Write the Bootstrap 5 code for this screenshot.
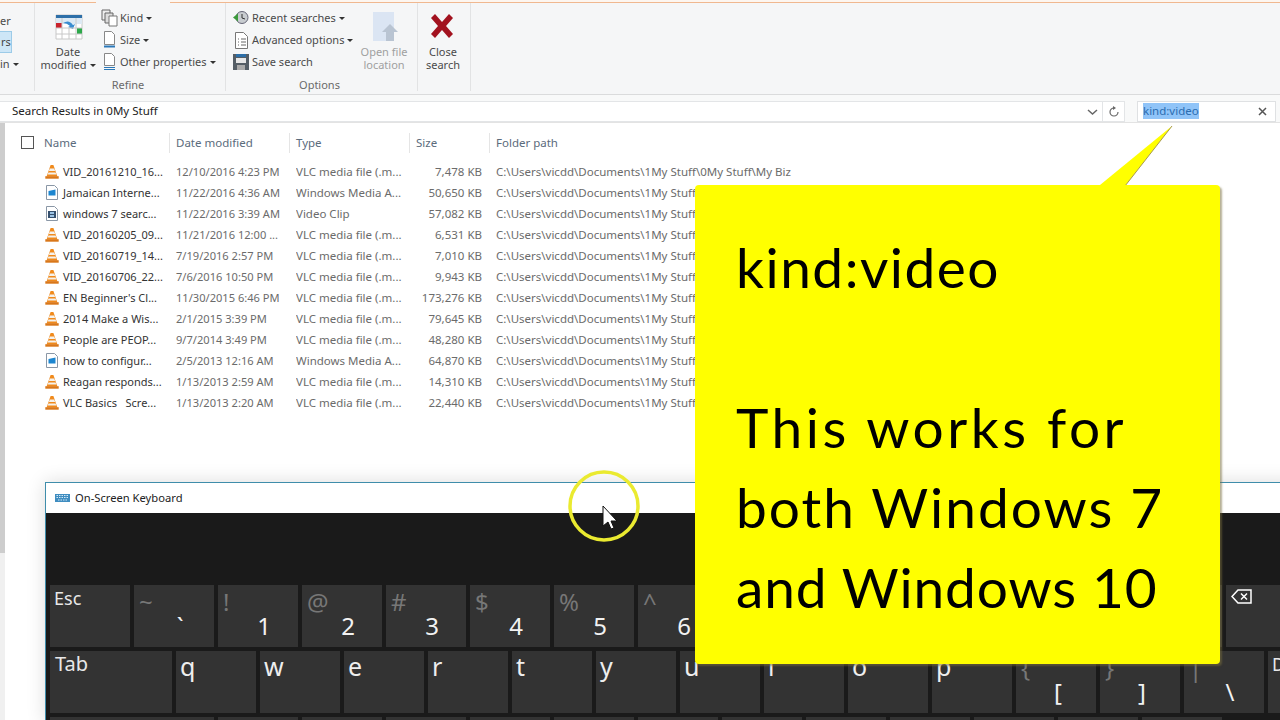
<!DOCTYPE html>
<html lang="en"><head><meta charset="utf-8"><title>Search</title>
<link href="https://cdn.jsdelivr.net/npm/bootstrap@5.3.0/dist/css/bootstrap.min.css" rel="stylesheet">
<style>
html,body{width:1280px;height:720px;overflow:hidden;background:#fff}
body{font-family:"Noto Sans","Open Sans",sans-serif;font-size:11.5px;line-height:1;color:#444}
.stage{width:1280px;height:720px;position:relative;overflow:hidden;background:#fff}
.tabline{height:3px;background:#f5f6f7}
.tabline>div{height:3px}
.tl-o{border-bottom:1px solid #f0b890;background:#fdf6f0}
.tl-w{background:#f5f6f7}
.rib{height:92px;background:#f5f6f7;border-bottom:1px solid #dadbdc}
.grp{position:relative;border-right:1px solid #e2e3e4;height:88px;flex:none}
.g0{width:35px}.g1{width:191px}.g2{width:192px}.g3{width:53px}
.glabel{position:absolute;left:0;right:4px;top:76px;text-align:center;color:#6a6a6a;font-size:11px}
.it{position:absolute;white-space:nowrap;color:#4a4a4a;font-size:11px;line-height:13px;margin-top:-1px}
.c{text-align:center;white-space:normal}
.car{display:inline-block;border-left:3px solid transparent;border-right:3px solid transparent;border-top:3px solid #333;vertical-align:2px;margin-left:3px}
.ico{position:absolute}
.addr{height:28px;padding-top:6px;background:#f8f9f9;border-bottom:1px solid #e3e3e3}
.abox{height:21px;background:#fff;border:1px solid #e3e5e7;border-left:0;width:1125px;margin-right:12px;color:#222;font-size:11.5px;padding-left:12px}
.abox-t{margin-top:-2px}
.sbox{height:21px;width:139px;background:#fff;border:1px solid #dfe1e3;padding-left:5px}
.sel{background:#90c4f8;color:#2a6cb0;font-size:11.5px;padding:2px 0;margin-top:-1px}
.refbtn{width:22px;height:19px;border-left:1px solid #e3e5e7;color:#666}
.track{width:5px;height:597px;background:#f0f0f0;flex:none}
.thumb{height:430px;background:#cdcdcd}
.side{width:15px;height:597px;background:#fff;flex:none}
.hdr{height:38px;padding-top:10px;color:#5b6b7c;font-size:11.5px}
.hc{flex:none;height:20px;padding-left:6px;border-left:1px solid #e5e5e5;line-height:20px}
.chk{width:13px;height:13px;border:1px solid #555;flex:none;margin:3px 10px 0 1px}
.rows{padding-left:25px}
.rw{height:21px;line-height:21px;color:#6b6b6b;white-space:nowrap;font-size:11.5px}
.n{width:131px;flex:none;color:#333;display:flex;align-items:center;gap:4px;font-size:11px}
.n svg{flex:none}
.d{width:120px;flex:none;font-size:11.1px}
.t{width:120px;flex:none;overflow:hidden}
.s{width:66px;flex:none;text-align:right}
.p{margin-left:14px;flex:none}
.osk{position:absolute;left:45px;top:482px;width:1300px;height:240px;border:1px solid #3f8dab;border-bottom:0;border-right:0;background:#1a1a1a;box-shadow:0 0 18px rgba(0,0,0,.14)}
.osk-t{height:30px;background:#fff;color:#222;font-size:11.2px;padding-left:9px;gap:5px}
.osk-e{height:72px}
.keys{padding-left:4px;gap:4px}
.krow{gap:4px;height:62px}
.ky{width:80px;height:62px;background:#333;position:relative;flex:none;color:#fff;font-family:"Noto Sans",sans-serif}
.ky.w1{width:122px}.ky.w2{width:164px}
.up{position:absolute;left:5px;top:4px;font-size:24px;line-height:26px;color:#777}
.dn{position:absolute;left:36px;width:20px;text-align:center;top:27px;font-size:24px;line-height:28px;color:#f2f2f2}
.dn-b{left:32px}
.lb{position:absolute;left:4px;top:3px;font-size:18px;line-height:20px;color:#e8e8e8}
.lb-t{left:5px;top:3px;font-size:20px}
.lt{position:absolute;left:4px;top:0;font-size:25px;line-height:30px;color:#eee}
.note{position:absolute;left:695px;top:185px;width:525px;height:479px;background:#ff0;border-radius:4px;box-shadow:2px 2px 2px rgba(120,110,60,.55);padding:42px 0 0 41px;color:#000;font-family:"Lato",sans-serif;font-size:55px;line-height:80px;white-space:nowrap;letter-spacing:1.5px}
.line-a{letter-spacing:3.5px}
.line-b{letter-spacing:2px}
.line-c{letter-spacing:.9px}
.tail{position:absolute;left:1090px;top:120px}
.ring{position:absolute;left:566px;top:468px}
</style></head>
<body>
<svg width="0" height="0" class="position-absolute">
<symbol id="vlc" viewBox="0 0 14 15"><path d="M5.600 1h2.800l4 11.500H1.600z" fill="#f08a1c"/><path d="M4.800 4.500h4.400l.9 2.600H3.900zM3.400 8.600h7.200l.7 2H2.700z" fill="#f4f2ee"/><path d="M.3 12.200h13.400v2.500H.3z" fill="#d9771a"/></symbol>
<symbol id="wma" viewBox="0 0 12 15"><path d="M.5.500h8l3 3v11H.5z" fill="#fff" stroke="#8a97a6"/><path d="M2.500 6l7-1.500v6h-7z" fill="#1d86d0"/></symbol>
<symbol id="vid" viewBox="0 0 12 15"><path d="M.5.500h8l3 3v11H.5z" fill="#fff" stroke="#8a97a6"/><path d="M2 5h8v7H2z" fill="#36506e"/><path d="M4 6h4v2H4zM4 9h4v2H4z" fill="#9cc4e6"/></symbol>
</svg>
<div class="stage">
  <div class="tabline d-flex"><div class="tl-o" style="width:96px"></div><div class="tl-w" style="width:74px"></div><div class="tl-o flex-grow-1"></div></div>
  <div class="rib d-flex">
    <div class="grp g0">
      <span class="it" style="left:0;top:12px">er</span>
      <span class="it" style="left:-8px;top:29px;background:#cde6f7;border:1px solid #9ccbe8;padding:3px 1px 3px 8px;height:22px;width:20px;color:#444">rs</span>
      <span class="it" style="left:0;top:55px">in<i class="car"></i></span>
    </div>
    <div class="grp g1">
      <svg class="ico" style="left:20px;top:11px" width="28" height="26" viewBox="0 0 28 26"><path d="M1 1h26v24H1z" fill="#fff" stroke="#c8c8c8"/><path d="M1 1h26v3H1z" fill="#2d6fa8"/><path d="M1 4h26v6H1z" fill="#dce9f4"/><path d="M1 9h6v5H1z" fill="#c9232c"/><path d="M22 14h5v6h-5z" fill="#2ca84a"/><path d="M8 9q6-4 10 2l2-1-2 5-5-2 2-1q-3-3-7-3z" fill="#3a8dd0"/><path d="M7 4v21M14 14v11M21 4v21M1 14h26M1 20h26" stroke="#c8c8c8" fill="none"/></svg>
      <div class="it c" style="left:0;width:66px;top:43px">Date<br>modified<i class="car"></i></div>
      <svg class="ico" style="left:66px;top:6px" width="17" height="18" viewBox="0 0 17 18"><path d="M1 1h8v10H1z" fill="#eee" stroke="#666"/><path d="M4 4h8v10H4z" fill="#ddd" stroke="#666"/><path d="M8 7h8v10H8z" fill="#fff" stroke="#777"/></svg>
      <span class="it" style="left:85px;top:9px">Kind<i class="car"></i></span>
      <svg class="ico" style="left:68px;top:28px" width="13" height="18" viewBox="0 0 13 18"><path d="M1.500.500h7l3 3v10h-10z" fill="#fff" stroke="#888"/><path d="M1 15.500h11" stroke="#2b78b8" stroke-width="2"/></svg>
      <span class="it" style="left:85px;top:31px">Size<i class="car"></i></span>
      <svg class="ico" style="left:68px;top:50px" width="13" height="18" viewBox="0 0 13 18"><path d="M1.500.500h7l3 3v9h-10z" fill="#fff" stroke="#888"/><path d="M1 14.500h11M1 16.500h11" stroke="#2b78b8"/></svg>
      <span class="it" style="left:85px;top:53px">Other properties<i class="car"></i></span>
      <div class="glabel">Refine</div>
    </div>
    <div class="grp g2">
      <svg class="ico" style="left:7px;top:7px" width="16" height="15" viewBox="0 0 16 15"><circle cx="9" cy="7.500" r="6" fill="#c8ccd0" stroke="#667"/><path d="M9 4v4l3 1" stroke="#333" fill="none"/><path d="M0 7.500l5-4v8z" fill="#3c9a3c"/></svg>
      <span class="it" style="left:26px;top:9px">Recent searches<i class="car"></i></span>
      <svg class="ico" style="left:9px;top:29px" width="13" height="17" viewBox="0 0 13 17"><path d="M.5.500h8l4 4v12H.5z" fill="#fff" stroke="#777"/><path d="M3 7h1M6 7h5M3 10h1M6 10h5M3 13h1M6 13h5" stroke="#666"/></svg>
      <span class="it" style="left:26px;top:31px">Advanced options<i class="car"></i></span>
      <svg class="ico" style="left:7px;top:51px" width="16" height="16" viewBox="0 0 16 16"><path d="M0 0h16v16H0z" fill="#555e66"/><path d="M3 0h10v3H3z" fill="#2d6fa8"/><path d="M3 4h10v5H3z" fill="#e8e8e8"/><path d="M4 11h8v5H4z" fill="#aaa"/></svg>
      <span class="it" style="left:26px;top:53px">Save search</span>
      <svg class="ico" style="left:147px;top:9px" width="26" height="30" viewBox="0 0 26 30"><path d="M0 0h21v29H0z" fill="#dbe5f3"/><path d="M17 12l8 8h-4v9h-8v-9H9z" fill="#b9c4d2"/></svg>
      <div class="it c" style="left:133px;width:50px;top:43px;color:#a0a0a0">Open file<br>location</div>
      <div class="glabel">Options</div>
    </div>
    <div class="grp g3">
      <svg class="ico" style="left:11px;top:10px" width="26" height="26" viewBox="0 0 26 26"><path d="M2 5l4-4 7 8 7-8 4 4-7 8 7 8-4 4-7-8-7 8-4-4 7-8z" fill="#a2121f"/></svg>
      <div class="it c" style="left:0;width:50px;top:43px">Close<br>search</div>
    </div>
  </div>
  <div class="addr d-flex">
    <div class="abox d-flex align-items-center justify-content-between">
      <span class="abox-t">Search Results in 0My Stuff</span>
      <span class="d-flex align-items-center">
        <svg width="11" height="8" viewBox="0 0 11 8" class="me-1"><path d="M1 2l4.500 4L10 2" stroke="#666" stroke-width="1.500" fill="none"/></svg>
        <span class="refbtn d-flex align-items-center justify-content-center"><svg width="12" height="12" viewBox="0 0 12 12"><path d="M6 2a4 4 0 1 0 4 4" stroke="#666" stroke-width="1.200" fill="none"/><path d="M5 0l3 2-3 2z" fill="#666"/></svg></span>
      </span>
    </div>
    <div class="sbox d-flex align-items-center justify-content-between"><span class="sel">kind:video</span><svg class="me-2" width="9" height="9" viewBox="0 0 9 9"><path d="M1 1l7 7M8 1l-7 7" stroke="#555" stroke-width="1.500"/></svg></div>
  </div>
  <div class="d-flex">
    <div class="track"><div class="thumb"></div></div><div class="side"></div>
    <div class="flex-grow-1">
      <div class="hdr d-flex">
        <div class="chk"></div>
        <div style="width:125px;flex:none;height:20px;line-height:20px">Name</div>
        <div class="hc" style="width:120px">Date modified</div>
        <div class="hc" style="width:120px">Type</div>
        <div class="hc" style="width:80px">Size</div>
        <div class="hc">Folder path</div>
      </div>
      <div class="rows">
        <div class="rw d-flex"><div class="n"><svg width="14" height="15"><use href="#vlc"/></svg>VID_20161210_16...</div><div class="d">12/10/2016 4:23 PM</div><div class="t">VLC media file (.m...</div><div class="s">7,478 KB</div><div class="p">C:\Users\vicdd\Documents\1My Stuff\0My Stuff\My Biz</div></div>
        <div class="rw d-flex"><div class="n"><svg width="14" height="15"><use href="#wma"/></svg>Jamaican Interne...</div><div class="d">11/22/2016 4:36 AM</div><div class="t">Windows Media A...</div><div class="s">50,650 KB</div><div class="p">C:\Users\vicdd\Documents\1My Stuff</div></div>
        <div class="rw d-flex"><div class="n"><svg width="14" height="15"><use href="#vid"/></svg>windows 7 searc...</div><div class="d">11/22/2016 3:39 AM</div><div class="t">Video Clip</div><div class="s">57,082 KB</div><div class="p">C:\Users\vicdd\Documents\1My Stuff</div></div>
        <div class="rw d-flex"><div class="n"><svg width="14" height="15"><use href="#vlc"/></svg>VID_20160205_09...</div><div class="d">11/21/2016 12:00 ...</div><div class="t">VLC media file (.m...</div><div class="s">6,531 KB</div><div class="p">C:\Users\vicdd\Documents\1My Stuff</div></div>
        <div class="rw d-flex"><div class="n"><svg width="14" height="15"><use href="#vlc"/></svg>VID_20160719_14...</div><div class="d">7/19/2016 2:57 PM</div><div class="t">VLC media file (.m...</div><div class="s">7,010 KB</div><div class="p">C:\Users\vicdd\Documents\1My Stuff</div></div>
        <div class="rw d-flex"><div class="n"><svg width="14" height="15"><use href="#vlc"/></svg>VID_20160706_22...</div><div class="d">7/6/2016 10:50 PM</div><div class="t">VLC media file (.m...</div><div class="s">9,943 KB</div><div class="p">C:\Users\vicdd\Documents\1My Stuff</div></div>
        <div class="rw d-flex"><div class="n"><svg width="14" height="15"><use href="#vlc"/></svg>EN Beginner's Cl...</div><div class="d">11/30/2015 6:46 PM</div><div class="t">VLC media file (.m...</div><div class="s">173,276 KB</div><div class="p">C:\Users\vicdd\Documents\1My Stuff</div></div>
        <div class="rw d-flex"><div class="n"><svg width="14" height="15"><use href="#vlc"/></svg>2014 Make a Wis...</div><div class="d">2/1/2015 3:39 PM</div><div class="t">VLC media file (.m...</div><div class="s">79,645 KB</div><div class="p">C:\Users\vicdd\Documents\1My Stuff</div></div>
        <div class="rw d-flex"><div class="n"><svg width="14" height="15"><use href="#vlc"/></svg>People are PEOP...</div><div class="d">9/7/2014 3:49 PM</div><div class="t">VLC media file (.m...</div><div class="s">48,280 KB</div><div class="p">C:\Users\vicdd\Documents\1My Stuff</div></div>
        <div class="rw d-flex"><div class="n"><svg width="14" height="15"><use href="#wma"/></svg>how to configur...</div><div class="d">2/5/2013 12:16 AM</div><div class="t">Windows Media A...</div><div class="s">64,870 KB</div><div class="p">C:\Users\vicdd\Documents\1My Stuff</div></div>
        <div class="rw d-flex"><div class="n"><svg width="14" height="15"><use href="#vlc"/></svg>Reagan responds...</div><div class="d">1/13/2013 2:59 AM</div><div class="t">VLC media file (.m...</div><div class="s">14,310 KB</div><div class="p">C:\Users\vicdd\Documents\1My Stuff</div></div>
        <div class="rw d-flex"><div class="n"><svg width="14" height="15"><use href="#vlc"/></svg>VLC Basics &nbsp; Scre...</div><div class="d">1/13/2013 2:20 AM</div><div class="t">VLC media file (.m...</div><div class="s">22,440 KB</div><div class="p">C:\Users\vicdd\Documents\1My Stuff</div></div>
      </div>
    </div>
  </div>
  <div class="osk">
    <div class="osk-t d-flex align-items-center"><svg width="15" height="8" viewBox="0 0 15 8"><path d="M0 0h15v8H0z" fill="#3f8dc0"/><path d="M1.500 1.500h12M1.500 3.500h12M3 6h9" stroke="#d4e8f6" stroke-dasharray="1.500 1"/></svg><span>On-Screen Keyboard</span></div>
    <div class="osk-e"></div>
    <div class="keys d-flex flex-column">
      <div class="krow d-flex">
        <div class="ky"><span class="lb">Esc</span></div>
        <div class="ky"><span class="up">~</span><span class="dn">`</span></div>
        <div class="ky"><span class="up">!</span><span class="dn">1</span></div>
        <div class="ky"><span class="up">@</span><span class="dn">2</span></div>
        <div class="ky"><span class="up">#</span><span class="dn">3</span></div>
        <div class="ky"><span class="up">$</span><span class="dn">4</span></div>
        <div class="ky"><span class="up">%</span><span class="dn">5</span></div>
        <div class="ky"><span class="up">^</span><span class="dn">6</span></div>
        <div class="ky"></div><div class="ky"></div><div class="ky"></div><div class="ky"></div><div class="ky"></div><div class="ky"></div>
        <div class="ky"><svg class="ico" style="left:5px;top:3px" width="22" height="17" viewBox="0 0 22 17"><path d="M7 2h13v13H7L1 8.500z" fill="none" stroke="#fff" stroke-width="1.500"/><path d="M10 5.500l6 6M16 5.500l-6 6" stroke="#fff" stroke-width="1.500"/></svg></div>
      </div>
      <div class="krow d-flex">
        <div class="ky w1"><span class="lb lb-t">Tab</span></div>
        <div class="ky"><span class="lt">q</span></div>
        <div class="ky"><span class="lt">w</span></div>
        <div class="ky"><span class="lt">e</span></div>
        <div class="ky"><span class="lt">r</span></div>
        <div class="ky"><span class="lt">t</span></div>
        <div class="ky"><span class="lt">y</span></div>
        <div class="ky"><span class="lt">u</span></div>
        <div class="ky"><span class="lt">i</span></div>
        <div class="ky"><span class="lt">o</span></div>
        <div class="ky"><span class="lt">p</span></div>
        <div class="ky"><span class="up">{</span><span class="dn dn-b">[</span></div>
        <div class="ky"><span class="up">}</span><span class="dn dn-b">]</span></div>
        <div class="ky"><span class="up">|</span><span class="dn">\</span></div>
        <div class="ky"><span class="lb">D</span></div>
      </div>
      <div class="krow d-flex">
        <div class="ky w2"></div><div class="ky"></div><div class="ky"></div><div class="ky"></div><div class="ky"></div><div class="ky"></div><div class="ky"></div><div class="ky"></div><div class="ky"></div><div class="ky"></div><div class="ky"></div><div class="ky"></div><div class="ky"></div>
      </div>
    </div>
  </div>
  <svg class="tail" width="90" height="70" viewBox="0 0 90 70"><path d="M10 65L82 6 35 66z" fill="#ff0"/><path d="M82 6L35 66" stroke="#a89a50" stroke-width="1" fill="none"/></svg>
  <div class="note"><span>kind:video</span><br><br><span class="line-a">This works for</span><br><span class="line-b">both Windows 7</span><br><span class="line-c">and Windows 10</span></div>
  <svg class="ring" width="76" height="76" viewBox="0 0 76 76"><circle cx="38" cy="38" r="34" fill="none" stroke="#eaea30" stroke-width="3.500"/><path d="M37 38v20l5-4 3 7 3-1-3-7h6z" fill="#fff" stroke="#111"/></svg>
</div>
</body></html>
